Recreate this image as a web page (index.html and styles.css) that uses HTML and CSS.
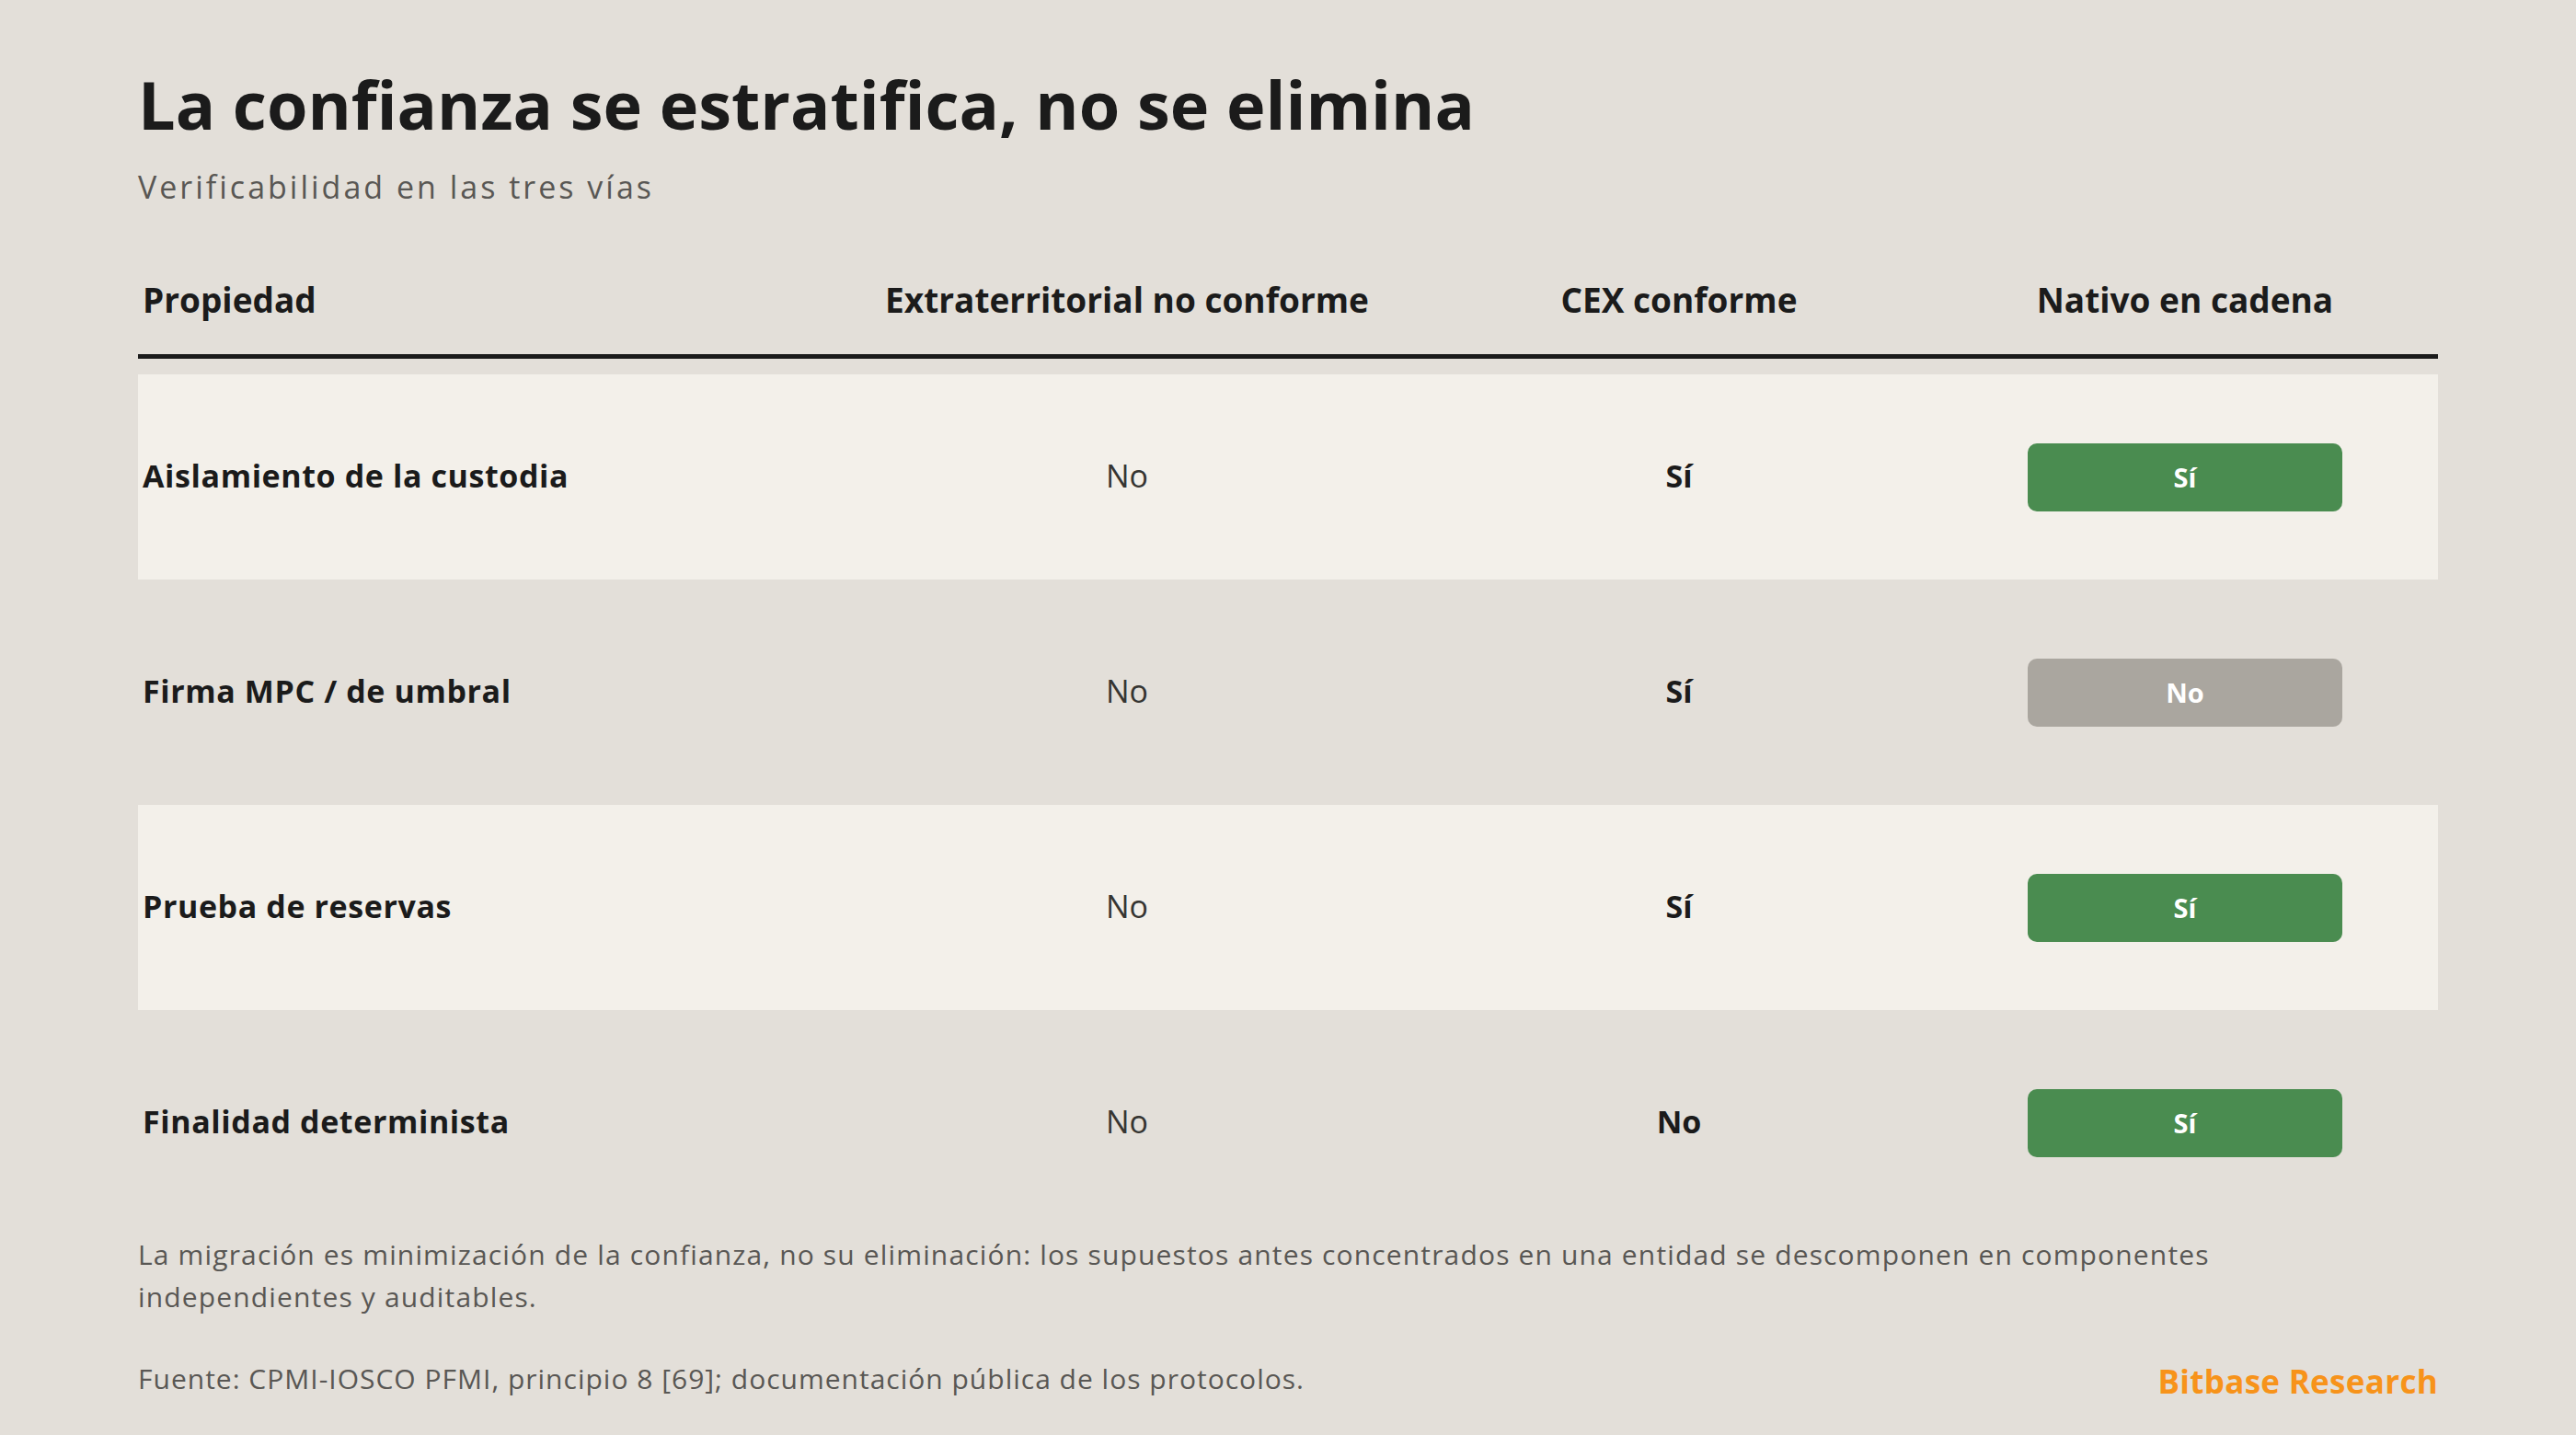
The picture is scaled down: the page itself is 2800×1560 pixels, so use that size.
FILE: index.html
```html
<!DOCTYPE html>
<html lang="es">
<head>
<meta charset="utf-8">
<title>La confianza se estratifica, no se elimina</title>
<link rel="stylesheet" href="styles.css">
</head>
<body>
<main class="page">
  <h1 class="title">La confianza se estratifica, no se elimina</h1>
  <p class="subtitle">Verificabilidad en las tres vías</p>

  <div class="table" role="table">
    <div class="row head" role="row">
      <div class="cell label" role="columnheader">Propiedad</div>
      <div class="cell" role="columnheader">Extraterritorial no conforme</div>
      <div class="cell" role="columnheader">CEX conforme</div>
      <div class="cell" role="columnheader">Nativo en cadena</div>
    </div>
    <div class="body">
      <div class="row band" role="row">
        <div class="cell label">Aislamiento de la custodia</div>
        <div class="cell plain">No</div>
        <div class="cell strong">Sí</div>
        <div class="cell"><span class="badge yes">Sí</span></div>
      </div>
      <div class="row" role="row">
        <div class="cell label">Firma MPC / de umbral</div>
        <div class="cell plain">No</div>
        <div class="cell strong">Sí</div>
        <div class="cell"><span class="badge no">No</span></div>
      </div>
      <div class="row band" role="row">
        <div class="cell label">Prueba de reservas</div>
        <div class="cell plain">No</div>
        <div class="cell strong">Sí</div>
        <div class="cell"><span class="badge yes">Sí</span></div>
      </div>
      <div class="row" role="row">
        <div class="cell label">Finalidad determinista</div>
        <div class="cell plain">No</div>
        <div class="cell strong">No</div>
        <div class="cell"><span class="badge yes">Sí</span></div>
      </div>
    </div>
  </div>

  <p class="note">La migración es minimización de la confianza, no su eliminación: los supuestos antes concentrados en una entidad se descomponen en componentes independientes y auditables.</p>

  <footer class="footer">
    <span class="source">Fuente: CPMI-IOSCO PFMI, principio 8 [69]; documentación pública de los protocolos.</span>
    <span class="brand">Bitbase Research</span>
  </footer>
</main>
</body>
</html>
```
FILE: styles.css
```css
html, body {
  margin: 0;
  padding: 0;
  background: #e3dfd9;
}

body {
  font-family: "Open Sans", "Liberation Sans", sans-serif;
  color: #1b1b1b;
}

.page {
  width: 2500px;
  padding: 77px 150px 0;
}

.title {
  margin: 0;
  font-size: 72px;
  line-height: 72px;
  font-weight: 700;
  letter-spacing: 0;
  color: #1b1b1b;
}

.subtitle {
  margin: 37px 0 0;
  font-size: 34px;
  line-height: 34px;
  font-weight: 400;
  letter-spacing: 3px;
  color: #595754;
}

.table {
  margin-top: 87px;
  display: flex;
  flex-direction: column;
}

.row {
  display: grid;
  grid-template-columns: 750px 650px 550px 550px;
  align-items: center;
}

.head {
  padding-bottom: 41px;
  border-bottom: 5px solid #1b1b1b;
}

.head .cell {
  font-size: 37px;
  line-height: 37px;
  font-weight: 700;
}

.cell {
  text-align: center;
}

.cell.label {
  text-align: left;
  padding-left: 5px;
}

.body {
  margin-top: 17px;
  display: flex;
  flex-direction: column;
  gap: 11px;
}

.body .row {
  height: 223px;
}

.body .cell {
  font-size: 34px;
  line-height: 34px;
  padding-bottom: 3px;
}

.body .cell.label {
  font-weight: 700;
  letter-spacing: 0.6px;
}

.cell.plain {
  font-weight: 400;
  color: #363532;
}

.cell.strong {
  font-weight: 700;
}

.band {
  background: #f3f0ea;
}

.badge {
  display: inline-block;
  width: 342px;
  height: 74px;
  line-height: 74px;
  margin-top: 3px;
  border-radius: 10px;
  font-size: 29px;
  font-weight: 700;
  color: #ffffff;
  vertical-align: middle;
}

.badge.yes {
  background: #4a8c50;
}

.badge.no {
  background: #aaa69f;
}

.note {
  margin: 9px 0 0;
  max-width: 2440px;
  font-size: 30px;
  line-height: 46px;
  letter-spacing: 1.15px;
  color: #595754;
}

.footer {
  margin-top: 43px;
  display: flex;
  justify-content: space-between;
  align-items: flex-end;
}

.source {
  font-size: 30px;
  line-height: 46px;
  letter-spacing: 1px;
  color: #595754;
}

.brand {
  font-size: 35px;
  line-height: 46px;
  font-weight: 700;
  letter-spacing: 0.3px;
  margin-bottom: -3px;
  color: #f7931a;
}
```
